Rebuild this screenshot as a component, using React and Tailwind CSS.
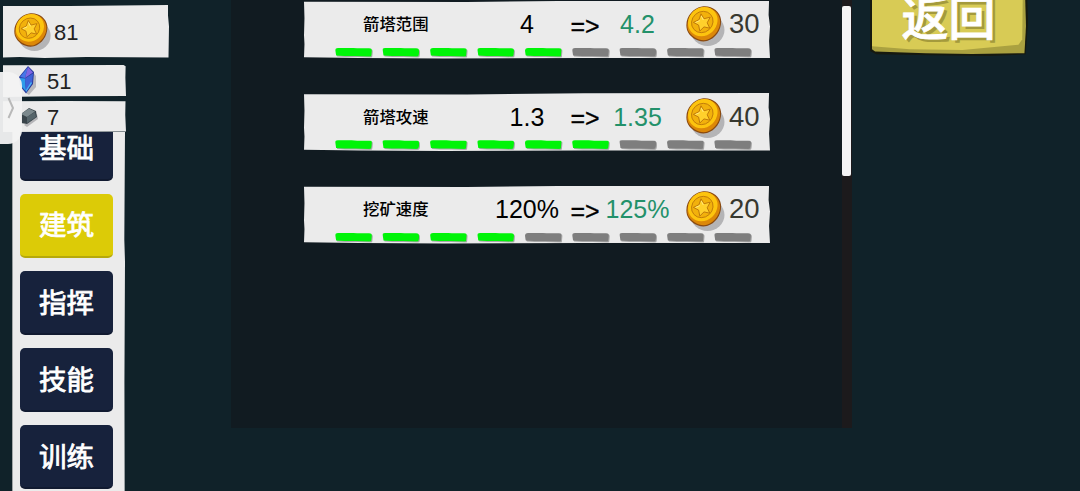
import React from 'react';

function Coin({ className }) {
  return (
    <svg viewBox="0 0 42 42" className={className} aria-hidden="true">
      <ellipse cx="22.5" cy="25" rx="17" ry="16" fill="#b4b4b6" />
      <path d="M17 1.500C26 0 35 6 36 14.500c1 9.500-5 19-14 21.500C14 38 5 33 2 25-1 14 7 3 17 1.500z" fill="#8a4a10" />
      <path d="M17 2.500C26 1 34 7 35 15c1 8.500-5 17-13 19.800C15 36.500 6 32 3 25 .500 15 7.500 4 17 2.500z" fill="#dc8808" />
      <ellipse cx="17.800" cy="16.600" rx="15.400" ry="13.900" transform="rotate(-42 17.800 16.600)" fill="#fdc40e" />
      <ellipse cx="17.300" cy="17" rx="11.200" ry="10.200" transform="rotate(-42 17.300 17)" fill="#f2b10c" stroke="#bf7a0a" strokeWidth=".9" />
      <path d="M16 8.800l3 4.900 6.200-1.500-3 5.600 2.600 5.400-5.800-1.300-4.200 4.100-1.200-5.900-5.200-2.700 5.600-2.700z" fill="#ffd02c" stroke="#c07a0a" strokeWidth="1" strokeLinejoin="round" />
      <path d="M16.300 11l2 4M10.500 17.400l4.300-1.800" stroke="#ffeb85" strokeWidth=".9" />
    </svg>
  );
}

function Crystal() {
  return (
    <svg viewBox="0 0 22 30" className="h-[30px] w-[22px] shrink-0" aria-hidden="true">
      <path d="M8 27l3 2 7-8V10l-3-4z" fill="#b9b9bc" />
      <path d="M10 0l6 6-1 12-7 9.500L2 20 1 11z" fill="#283a9b" />
      <path d="M10 1L2 11l5 1z" fill="#4676e8" />
      <path d="M10 1l5 5.500L7 12z" fill="#8066e2" />
      <path d="M2 12l5 .500 1 13L3 20z" fill="#2e9bea" />
      <path d="M7 12.500l8-5-1 10-6 8.500z" fill="#3f62d8" />
      <path d="M8 24l5-8 1 1-6 9z" fill="#46b5f4" />
    </svg>
  );
}

function Ingot() {
  return (
    <svg viewBox="0 0 22 22" className="h-[22px] w-[22px] shrink-0" aria-hidden="true">
      <path d="M4 19l3 2 11-8-1-5z" fill="#b5b5b8" />
      <path d="M1 8l8-6 7 3 1 6-10 7-6-1z" fill="#39444a" />
      <path d="M1 8l8-5.500 6 3L7 11z" fill="#7c898d" />
      <path d="M7 11l8-5 1 5-9 6z" fill="#56656b" />
    </svg>
  );
}

const upgrades = [
  { name: '箭塔范围', now: '4', next: '4.2', price: 30, level: 5 },
  { name: '箭塔攻速', now: '1.3', next: '1.35', price: 40, level: 6 },
  { name: '挖矿速度', now: '120%', next: '125%', price: 20, level: 4 },
];

function UpgradeCard({ item }) {
  return (
    <div className="flex h-[58px] w-[466px] flex-col bg-[#ebebeb] [clip-path:polygon(0_2%,35%_2.5%,60%_0.5%,99.8%_0,99.7%_25%,100%_45%,99.8%_70%,100%_99%,60%_99%,30%_100%,12%_99%,0_98%,0.1%_75%,0_60%,0.1%_30%)]">
      <div className="flex h-[46px] items-center pl-[59px] pt-[2px] text-[25px] leading-none text-black">
        <span className="w-[124px] text-[16.4px] font-medium">{item.name}</span>
        <span className="w-[80px] text-center">{item.now}</span>
        <span className="w-[36px] pt-[3px] text-center [-webkit-text-stroke:0.3px_black]">=&gt;</span>
        <span className="w-[69px] text-center text-[#23916a]">{item.next}</span>
        <Coin className="ml-[13px] mt-[2px] h-[42px] w-[42px] shrink-0" />
        <span className="ml-[2px] pb-px text-[27.5px] text-[#37382f]">{item.price}</span>
      </div>
      <div className="flex gap-[10.4px] pl-[31px] pt-px">
        {Array.from({ length: 9 }, (_, i) => (
          <div key={i} className="h-[10px] w-[37px] drop-shadow-[1px_1px_0px_#a8a8a8]">
            <div
              className={`h-[9px] w-[37px] rounded-[3px] [clip-path:polygon(0_4%,45%_4%,60%_9%,100%_9%,98%_100%,75%_98%,55%_95%,25%_95%,3%_88%)] ${i < item.level ? 'bg-[#00f408]' : 'bg-[#7e7e7e]'}`}
            />
          </div>
        ))}
      </div>
    </div>
  );
}

const tabs = ['基础', '建筑', '指挥', '技能', '训练'];

function Sidebar() {
  return (
    <nav className="ml-[12px] flex h-[359px] w-[113px] flex-col overflow-hidden border-l border-[#9da1a2] bg-[#ebebeb] pl-[7px] [clip-path:polygon(0_0,100%_0,99.4%_30%,100%_36%,99.5%_70%,99.7%_100%,0.3%_100%,0_70%,0.4%_40%)]">
      <div className="-mt-[15.5px] flex flex-col gap-[13.200px]">
        {tabs.map((tab) => (
          <button
            key={tab}
            className={`flex h-[64px] w-[93px] shrink-0 items-center justify-center rounded-[5px] border-b-2 pt-[3px] text-[27.500px] font-normal leading-none text-white [-webkit-text-stroke:0.8px_white] ${tab === '建筑' ? 'border-[#b6a90b] bg-[#dccb07]' : 'border-[#111a30] bg-[#17223c]'}`}
          >
            {tab}
          </button>
        ))}
      </div>
    </nav>
  );
}

function Resources() {
  return (
    <div className="flex flex-col pl-[3px] pt-[5px] text-[22px] leading-none text-[#222222]">
      <div className="flex h-[53px] w-[166px] items-center bg-[#ebebeb] pl-[10px] [clip-path:polygon(0_2%,40%_2%,99.4%_0,99.4%_20%,100%_40%,99.7%_99%,50%_98%,25%_100%,10%_98%,0_99%)]">
        <Coin className="h-[40px] w-[40px] shrink-0" />
        <span className="ml-px pt-[2px]">81</span>
      </div>
      <div className="mt-[7px] flex h-[32px] w-[123px] items-center bg-[#ebebeb] pl-[15px] [clip-path:polygon(0_1%,98%_0,99.7%_4%,99.5%_40%,100%_97%,40%_98%,0_100%)]">
        <Crystal />
        <span className="ml-[7px] pt-px">51</span>
      </div>
      <div className="mt-[4px] flex h-[31px] w-[123px] items-center bg-[#ebebeb] pl-[17px] [clip-path:polygon(0_1%,50%_0,99.600%_1%,99.4%_45%,100%_98%,0_100%)]">
        <Ingot />
        <span className="ml-[5px] pt-[2px]">7</span>
      </div>
    </div>
  );
}

export default function App() {
  return (
    <main className="relative flex h-[491px] w-[1080px] overflow-hidden bg-[#102229] font-['Liberation_Sans','Noto_Sans_CJK_SC',sans-serif]">
      <section className="w-[231px] shrink-0">
        <Resources />
        <Sidebar />
      </section>

      <section className="flex h-[428px] w-[621px] shrink-0 bg-[#111b21]">
        <div className="flex w-[611px] flex-col gap-[34.500px] pl-[73px] pt-[0.500px]">
          {upgrades.map((item) => (
            <UpgradeCard key={item.name} item={item} />
          ))}
        </div>
        <div className="h-full w-[10px] bg-[#1c1a1c] pt-[6px]">
          <div className="h-[170px] w-[9px] rounded-[2px] bg-[#f4f4f5]" />
        </div>
      </section>

      <section className="pl-[18px]">
        <button className="-mt-[28px] flex h-[84px] w-[158px] bg-[#16190f] pl-[2px] pt-[2px] [clip-path:polygon(0_0,99%_0,100%_60%,98.5%_98%,75%_100%,40%_99%,4%_98%,0_94%)]">
          <div className="h-[80px] w-[154px] bg-[#aaa140] [clip-path:polygon(0_0,99%_0,100%_65%,99%_99%,65%_100%,35%_99%,2%_97%,0_94%)]">
            <div className="flex h-[76px] w-[151px] items-center justify-center bg-[#d8cb55] pl-[2px] pt-[13px] text-[47px] font-medium leading-none text-white [-webkit-text-stroke:0.8px_white] [clip-path:polygon(0_0,100%_0,99.5%_86%,97%_93%,60%_100%,25%_99%,0_95%)] [text-shadow:3px_3px_0_#a49a3c]">
              返回
            </div>
          </div>
        </button>
      </section>

      <div className="absolute left-0 top-[72px] flex h-[72px] w-[22px] items-center justify-center rounded-r-[14px] bg-[#f3f3f3]/95">
        <svg viewBox="0 0 8 24" className="h-[24px] w-[8px]" fill="none" stroke="#b9b9b9" strokeWidth="2" aria-hidden="true">
          <path d="M1.500 2l4.500 10-4.500 10" />
        </svg>
      </div>
    </main>
  );
}
